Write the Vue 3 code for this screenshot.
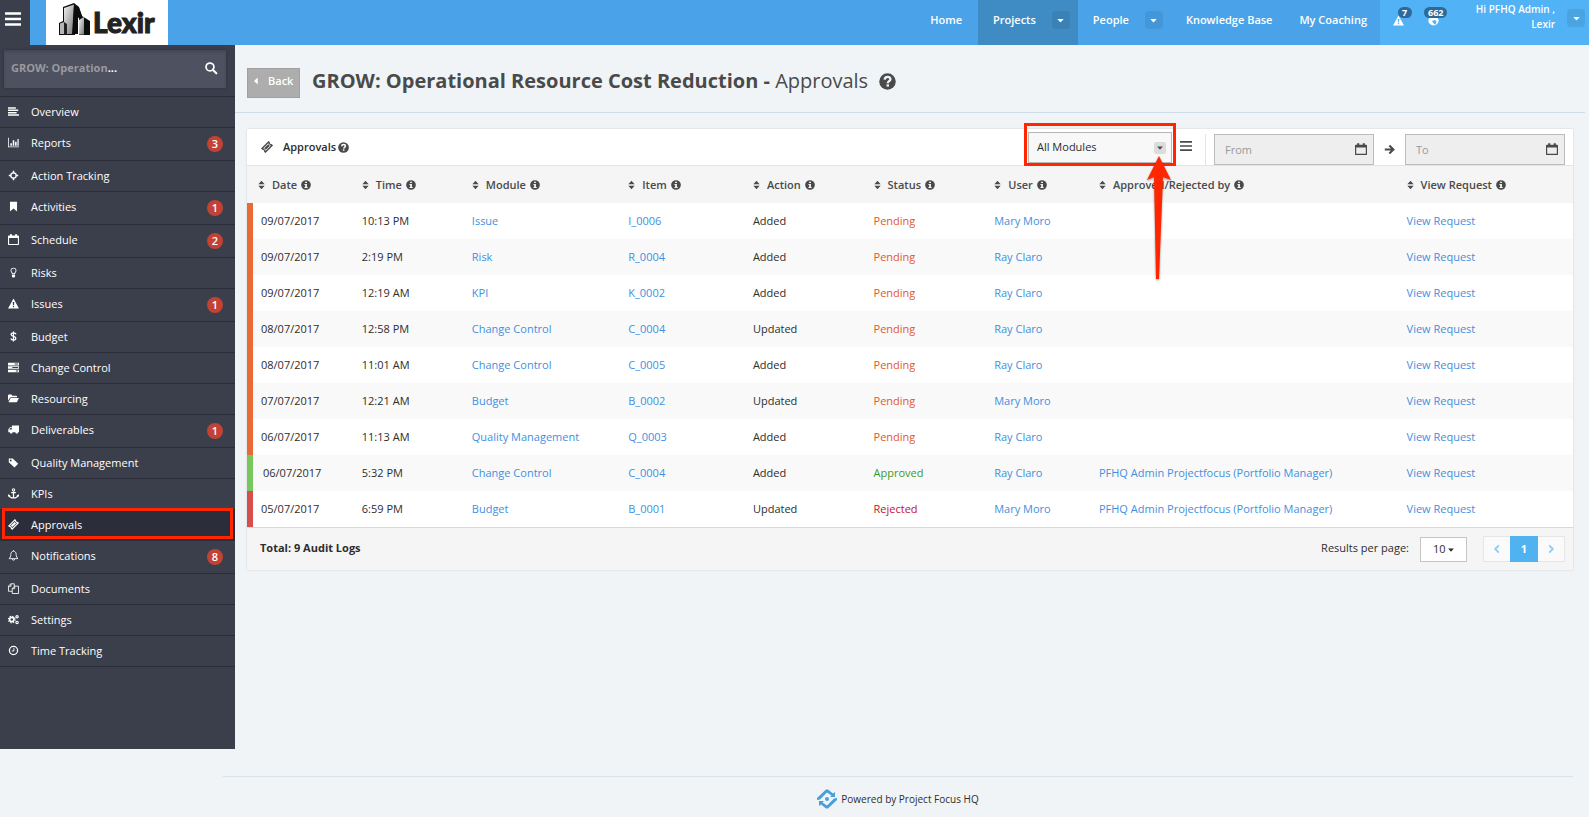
<script setup>
import { ref } from 'vue'

const icons = {
  align: '<path d="M0 1.600h10v1.800H0zM0 4.600h13v1.800H0zM0 7.600h11v1.800H0zM0 10.600h14v1.800H0z"/>',
  chart: '<path d="M0 1h1v11h13v1H0zM3 8h2v3H3zM6 4h2v7H6zM9 6h2v5H9zM12 2.5h1.6V11H12z"/>',
  target: '<path d="M6 1h2v3H6zM6 10h2v3H6zM1 6h3v2H1zM10 6h3v2h-3z"/><path d="M7 2.8a4.2 4.2 0 1 0 0 8.4 4.2 4.2 0 0 0 0-8.4zm0 1.6a2.6 2.6 0 1 1 0 5.2 2.6 2.6 0 0 1 0-5.2z"/>',
  bookmark: '<path d="M2.5 1h9v12.4L7 9.4l-4.500 4z"/>',
  calendar: '<path fill-rule="evenodd" d="M1 2h1.500V.2h2.500V2h4V.2h2.500V2H13q1 0 1 1v10q0 1-1 1H1q-1 0-1-1V3q0-1 1-1zm.4 3.200v7.400h11.200V5.200z"/>',
  bulb: '<path fill-rule="evenodd" d="M7 .8c2.300 0 3.800 1.500 3.800 3.600 0 2-1.600 2.600-1.800 4.600H5C4.800 7 3.200 6.400 3.200 4.400 3.200 2.300 4.700.8 7 .8zm0 1.100c-1.600 0-2.700 1-2.700 2.500C4.300 5.900 5.700 6.600 6 8h2c.3-1.400 1.700-2.100 1.700-3.600C9.700 2.900 8.600 1.900 7 1.900zM5 9.600h4v2.800l-1 1H6l-1-1z"/>',
  warning: '<path fill-rule="evenodd" d="M7 .6 14 13.400H0zM6 5l.3 4h1.400L8 5zm.2 5v1.700h1.600V10z"/>',
  dollar: '<path d="M10.300 4.200C9.800 3 8.700 2.400 7 2.400S4 3.100 4 4.500C4 7.500 10 6 10 9.200c0 1.500-1.200 2.300-3 2.300s-3-.7-3.400-2M7 .5v13" fill="none" stroke="currentColor" stroke-width="1.600"/>',
  tasks: '<path fill-rule="evenodd" d="M0 1h14v3.300H0zM8.500 2v1.300H13V2zM0 5.400h14v3.300H0zM5.500 6.400v1.300H13V6.400zM0 9.800h14v3.300H0zM10 10.800v1.300h3v-1.300z"/>',
  folder: '<path d="M0 10V3.200Q0 2 1.200 2h3Q5 2 5.300 3.400h5q1.200 0 1.200 1.200v.8H4Q3 5.400 2.300 6.400zM4 6.400h10L11.600 11q-.5.900-1.500.9H.6L3 7q.4-.6 1-.6z"/>',
  truck: '<path fill-rule="evenodd" d="M14 2v8.600h-1.200a1.700 1.700 0 0 1-3.400 0H5.800a1.700 1.700 0 0 1-3.400 0H.4V6.600L2.600 4H5V2zM1.500 7H5V5H3z"/>',
  tag: '<path fill-rule="evenodd" d="M1 2h5l7 6.600-4.800 4.800L1 6.800zm2.500 1.300a1.200 1.200 0 1 0 0 2.400 1.200 1.200 0 0 0 0-2.400z"/>',
  anchor: '<circle cx="7" cy="2.400" r="1.500" fill="none" stroke="currentColor" stroke-width="1.300"/><path d="M7 4v8.600M4 5.800h6M1.200 9c.6 2.400 2.800 3.700 5.800 3.700s5.200-1.300 5.800-3.700" fill="none" stroke="currentColor" stroke-width="1.600"/><path d="M0 11V7.800l3.200 1.600zM14 11V7.800l-3.200 1.600z"/>',
  ticket: '<path fill-rule="evenodd" d="M8.800 0 10.400 1.600q-.4 1.100.4 1.700.7.700 1.700.3L14 5.200 5.200 14 3.600 12.400q.4-1-.4-1.700-.7-.7-1.700-.4L0 8.800zM8.400 2.700 2.700 8.400l2.900 2.900 5.700-5.700zM8.400 3.700 10.300 5.600 5.600 10.300 3.700 8.400z"/>',
  bell: '<path d="M7 1.500C4.700 1.700 3.600 3.200 3.600 5.500c0 3-1 4.500-2.400 5.500h11.600c-1.400-1-2.400-2.500-2.400-5.500 0-2.300-1.100-3.800-3.400-4zM7 .3v1.200M5.500 11.500a1.500 1.500 0 0 0 3 0" fill="none" stroke="currentColor" stroke-width="1.100"/>',
  copy: '<path d="M5 10.500H.6V4L3.500 1H8v3M3.700 1v3.200H.6M8.300 4h5.100v9.400H5.400V7zM8.500 4v3.200H5.400" fill="none" stroke="currentColor" stroke-width="1.100"/>',
  cogs: '<circle cx="4.800" cy="7" r="2.700" fill="none" stroke="currentColor" stroke-width="2"/><circle cx="4.800" cy="7" r="4.200" fill="none" stroke="currentColor" stroke-width="1.500" stroke-dasharray="1.650 1.650"/><circle cx="11.500" cy="3.500" r="1.500" fill="none" stroke="currentColor" stroke-width="1.500"/><circle cx="11.500" cy="10.700" r="1.500" fill="none" stroke="currentColor" stroke-width="1.500"/>',
  clock: '<circle cx="7" cy="7" r="5.200" fill="none" stroke="currentColor" stroke-width="1.600"/><path d="M7.500 4v3.600H4.800" fill="none" stroke="currentColor" stroke-width="1.200"/>',
  search: '<circle cx="5.800" cy="5.800" r="4.600" fill="none" stroke="currentColor" stroke-width="2"/><path d="m9 9 4.200 4.200" stroke="currentColor" stroke-width="2.400" stroke-linecap="round"/>',
  info: '<path fill-rule="evenodd" d="M7 .2a6.800 6.800 0 1 0 0 13.600A6.800 6.800 0 0 0 7 .2zM5.700 2.300h2.600v2H5.700zM4.800 5.600h3.500v4.200h1.100v1.500H4.800V9.800h1V7.100h-1z"/>',
  help: '<circle cx="7" cy="7" r="6.800"/><path d="M4.700 5.400C4.800 3.900 5.700 3.200 7 3.200s2.400.8 2.400 2c0 1.500-2.200 1.600-2.200 3.200" fill="none" stroke="var(--mark, #fff)" stroke-width="1.900"/><path d="M6.200 9.300h2v1.900h-2z" fill="var(--mark, #fff)"/>',
  sort: '<path d="M7 1l4.500 4.800h-9zM7 13l4.500-4.800h-9z"/>',
  caret: '<path d="M2 4.500h10L7 10z"/>',
  bars: '<path d="M0 1.200h14v2H0zM0 6h14v2H0zM0 10.800h14v2H0z"/>',
  arrow: '<path d="M1 7h10.500M6.800 1.800 12 7l-5.200 5.200" fill="none" stroke="currentColor" stroke-width="2.600"/>',
  left: '<path d="M9.500 2 4.500 7l5 5" fill="none" stroke="currentColor" stroke-width="2.600"/>',
  right: '<path d="m4.500 2 5 5-5 5" fill="none" stroke="currentColor" stroke-width="2.600"/>',
  back: '<path d="M10 1v12L3.500 7z"/>',
  globe: '<path fill-rule="evenodd" d="M7 .5a6.500 6.500 0 1 0 0 13 6.500 6.500 0 0 0 0-13zM5 7.500l4-1 2 2-2 4-2-2z"/>'
}

const menu = [
  { label: 'Overview', icon: 'align' },
  { label: 'Reports', icon: 'chart', count: 3 },
  { label: 'Action Tracking', icon: 'target' },
  { label: 'Activities', icon: 'bookmark', count: 1 },
  { label: 'Schedule', icon: 'calendar', count: 2 },
  { label: 'Risks', icon: 'bulb' },
  { label: 'Issues', icon: 'warning', count: 1 },
  { label: 'Budget', icon: 'dollar' },
  { label: 'Change Control', icon: 'tasks' },
  { label: 'Resourcing', icon: 'folder' },
  { label: 'Deliverables', icon: 'truck', count: 1 },
  { label: 'Quality Management', icon: 'tag' },
  { label: 'KPIs', icon: 'anchor' },
  { label: 'Approvals', icon: 'ticket', active: true },
  { label: 'Notifications', icon: 'bell', count: 8 },
  { label: 'Documents', icon: 'copy' },
  { label: 'Settings', icon: 'cogs' },
  { label: 'Time Tracking', icon: 'clock' }
]

const columns = ['Date', 'Time', 'Module', 'Item', 'Action', 'Status', 'User', 'Approved/Rejected by', 'View Request']
const approver = 'PFHQ Admin Projectfocus (Portfolio Manager)'
const rows = [
  ['09/07/2017', '10:13 PM', 'Issue', 'I_0006', 'Added', 'Pending', 'Mary Moro', ''],
  ['09/07/2017', '2:19 PM', 'Risk', 'R_0004', 'Added', 'Pending', 'Ray Claro', ''],
  ['09/07/2017', '12:19 AM', 'KPI', 'K_0002', 'Added', 'Pending', 'Ray Claro', ''],
  ['08/07/2017', '12:58 PM', 'Change Control', 'C_0004', 'Updated', 'Pending', 'Ray Claro', ''],
  ['08/07/2017', '11:01 AM', 'Change Control', 'C_0005', 'Added', 'Pending', 'Ray Claro', ''],
  ['07/07/2017', '12:21 AM', 'Budget', 'B_0002', 'Updated', 'Pending', 'Mary Moro', ''],
  ['06/07/2017', '11:13 AM', 'Quality Management', 'Q_0003', 'Added', 'Pending', 'Ray Claro', ''],
  ['06/07/2017', '5:32 PM', 'Change Control', 'C_0004', 'Added', 'Approved', 'Ray Claro', approver],
  ['05/07/2017', '6:59 PM', 'Budget', 'B_0001', 'Updated', 'Rejected', 'Mary Moro', approver]
]

const moduleFilter = ref('All Modules')
const perPage = ref('10')
const from = ref('')
const to = ref('')
</script>

<template>
  <div class="page">
    <header class="topbar">
      <button class="toggle" type="button" aria-label="Toggle menu">
        <svg viewBox="0 0 14 14" v-html="icons.bars" />
      </button>
      <a class="brand" href="#">
        <svg class="towers" viewBox="0 0 32 33">
          <defs>
            <linearGradient id="face" x1="0" y1="0" x2="1" y2="1">
              <stop offset="0" stop-color="#f2f2f2" /><stop offset="1" stop-color="#777" />
            </linearGradient>
          </defs>
          <path d="M4 4 15 0l5 4 3 9 8 5v14H20V13l-4-11v30H0V20l4-2z" fill="#0c0c0c" />
          <path d="M5 5 15 1.500 13 31H5z" fill="url(#face)" />
          <path d="M15 1.500 20 5l3 8-4 2v16h-5z" fill="#0c0c0c" />
          <path d="M1 20.500l4-1.500V31H1z" fill="#b5b5b5" />
          <path d="M5 19l3 2v10.500H5z" fill="#222" />
          <path d="M20 17l5-3v17.500h-5z" fill="url(#face)" />
        </svg>
        <span>Lexir</span>
      </a>
      <nav class="nav">
        <a class="home" href="#">Home</a>
        <div class="group current">
          <a href="#">Projects</a>
          <button type="button" aria-label="Projects menu"><svg viewBox="0 0 14 14" v-html="icons.caret" /></button>
        </div>
        <div class="group">
          <a href="#">People</a>
          <button type="button" aria-label="People menu"><svg viewBox="0 0 14 14" v-html="icons.caret" /></button>
        </div>
        <a class="knowledge" href="#">Knowledge Base</a>
        <a class="coaching" href="#">My Coaching</a>
      </nav>
      <div class="account">
        <a class="alert" href="#" aria-label="Alerts">
          <svg viewBox="0 0 14 14" v-html="icons.warning" /><span>7</span>
        </a>
        <a class="alert wide" href="#" aria-label="Activity">
          <svg viewBox="0 0 14 14" v-html="icons.globe" /><span>662</span>
        </a>
        <div class="who">Hi PFHQ Admin ,<br>Lexir</div>
        <button type="button" aria-label="Account menu"><svg viewBox="0 0 14 14" v-html="icons.caret" /></button>
      </div>
    </header>

    <div class="shell">
      <aside class="sidebar">
        <button class="picker" type="button">
          <span><span class="muted">GROW: Operation</span>...</span>
          <svg viewBox="0 0 14 14" v-html="icons.search" />
        </button>
        <ul>
          <li v-for="m in menu" :key="m.label" :class="{ active: m.active }">
            <a href="#">
              <svg viewBox="0 0 14 14" v-html="icons[m.icon]" />
              <span class="label">{{ m.label }}</span>
              <span v-if="m.count" class="count">{{ m.count }}</span>
            </a>
          </li>
        </ul>
      </aside>

      <main>
        <div class="heading">
          <button class="back" type="button"><svg viewBox="0 0 14 14" v-html="icons.back" />Back</button>
          <h1>GROW: Operational Resource Cost Reduction - <span>Approvals</span></h1>
          <svg class="help" viewBox="0 0 14 14" v-html="icons.help" />
        </div>

        <section class="panel">
          <div class="tools">
            <svg class="ticket" viewBox="0 0 14 14" v-html="icons.ticket" />
            <h2>Approvals</h2>
            <svg class="help" viewBox="0 0 14 14" v-html="icons.help" />
            <div class="module">
              <select v-model="moduleFilter" aria-label="Module"><option>All Modules</option></select>
              <span class="drop"><svg viewBox="0 0 14 14" v-html="icons.caret" /></span>
              <span class="frame" />
              <svg class="pointer" viewBox="0 0 24 124"><path d="M12 0 24 24 16 21 12 123H9L7 21 0 24z" /></svg>
            </div>
            <button class="list" type="button" aria-label="List options"><svg viewBox="0 0 14 14" v-html="icons.bars" /></button>
            <div class="dates">
              <div class="date">
                <input v-model="from" placeholder="From" aria-label="From">
                <svg viewBox="0 0 14 14" v-html="icons.calendar" />
              </div>
              <svg class="to" viewBox="0 0 14 14" v-html="icons.arrow" />
              <div class="date">
                <input v-model="to" placeholder="To" aria-label="To">
                <svg viewBox="0 0 14 14" v-html="icons.calendar" />
              </div>
            </div>
          </div>

          <table>
            <colgroup><col v-for="(c, i) in columns" :key="c" :class="'c' + i"></colgroup>
            <thead>
              <tr>
                <th v-for="c in columns" :key="c" scope="col">
                  <div>
                    <svg class="sort" viewBox="2 0 10 14" v-html="icons.sort" />
                    <span>{{ c }}</span>
                    <svg class="info" viewBox="0 0 14 14" v-html="icons.info" />
                  </div>
                </th>
              </tr>
            </thead>
            <tbody>
              <tr v-for="(r, i) in rows" :key="i" :class="r[5].toLowerCase()">
                <td>{{ r[0] }}</td>
                <td>{{ r[1] }}</td>
                <td><a href="#">{{ r[2] }}</a></td>
                <td><a href="#">{{ r[3] }}</a></td>
                <td>{{ r[4] }}</td>
                <td class="status">{{ r[5] }}</td>
                <td><a href="#">{{ r[6] }}</a></td>
                <td><a v-if="r[7]" href="#">{{ r[7] }}</a></td>
                <td><a href="#">View Request</a></td>
              </tr>
            </tbody>
          </table>

          <div class="summary">
            <strong>Total: 9 Audit Logs</strong>
            <label for="per-page">Results per page:</label>
            <div class="size">
              <select id="per-page" v-model="perPage"><option>10</option></select>
              <svg viewBox="0 0 14 14" v-html="icons.caret" />
            </div>
            <nav class="pages" aria-label="Pages">
              <button type="button" aria-label="Previous"><svg viewBox="0 0 14 14" v-html="icons.left" /></button>
              <button type="button" class="on">1</button>
              <button type="button" aria-label="Next"><svg viewBox="0 0 14 14" v-html="icons.right" /></button>
            </nav>
          </div>
        </section>
      </main>
    </div>

    <footer>
      <svg viewBox="0 0 20 20">
        <path d="M0 11V9L9 .5h2l5 4 2-1.500v5h-5l1.500-1.500L10 3.500 3 10.500zM20 9v2l-9 8.500H9l-5-4L2 17v-5h5l-1.500 1.500L10 16.500l7-7z" fill="#4a9fd8" />
        <circle cx="10" cy="10" r="2" fill="#4a9fd8" />
      </svg>
      <span>Powered by Project Focus HQ</span>
    </footer>
  </div>
</template>

<style>
body { margin: 0; background: #f0f4f7; }
</style>

<style scoped>
* { box-sizing: border-box; }
.page {
  min-height: 100vh;
  font: 11px/16px "Open Sans", "Noto Sans", sans-serif;
  color: #2d2d2d;
}
svg { display: block; flex: none; fill: currentColor; overflow: visible; }
a { color: #3f90e0; text-decoration: none; }
button, select, input { font: inherit; color: inherit; margin: 0; padding: 0; border: 0; border-radius: 0; background: none; }
button { cursor: pointer; }

.topbar { display: flex; height: 45px; background: #4aa3e9; color: #fff; }
.topbar a { color: #fff; }
.toggle { width: 30px; background: #3b3e4b; }
.toggle svg { width: 16px; height: 16px; margin: -7px 0 0 5px; }
.brand { display: flex; width: 122px; margin-left: 16px; padding: 3px 0 0 13px; background: #fff; }
.towers { width: 32px; height: 33px; }
.topbar .brand span { color: #222; font: 900 28px/38px Lato, sans-serif; margin-left: 2px; -webkit-text-stroke: 1px #222; }
.nav { display: flex; margin-left: auto; align-items: stretch; line-height: 40px; font-weight: 600; }
.home { padding-right: 16px; }
.group { display: flex; padding: 0 8px 0 15px; }
.group.current { background: #3f8cc5; }
.group button, .account button { display: grid; place-items: center; width: 18px; height: 18px; border-radius: 4px; background: #00000014; }
.group button { margin: 11px 0 0 16px; }
.group svg, .account button svg { width: 9px; height: 9px; }
.knowledge { padding: 0 14px 0 15px; }
.coaching { padding: 0 13px; }
.account { display: flex; width: 209px; padding: 0 4px 0 13px; background: #51b2f6; }
.alert { position: relative; width: 35px; padding-top: 15px; }
.alert svg { width: 11px; height: 11px; }
.alert span { position: absolute; left: 5px; top: 7px; min-width: 14px; padding: 0 4px; border-radius: 6px; background: #2d6a99; font: 700 9px/11px "Open Sans", sans-serif; }
.alert.wide span { left: -4px; }
.who { flex: 1; margin-right: 12px; padding-top: 2px; text-align: right; line-height: 15px; font-weight: 600; font-size: 10px; }
.account button { margin-top: 9px; }

.shell { display: flex; min-height: calc(100vh - 113px); }
.sidebar { flex: none; width: 235px; background: #3b3e4b; color: #fff; }
.picker { display: flex; align-items: center; justify-content: space-between; width: 222px; height: 38px; margin: 5px 0 8px 4px; padding: 0 9px 2px 7px; background: #4e5160; box-shadow: 0 0 2px #2d303c, inset 0 2px 2px #444754; font-weight: 700; }
.picker svg { width: 12px; height: 12px; }
.muted { color: #999a9f; }
ul { list-style: none; margin: 0; padding: 0; border-bottom: 1px solid #2b2e3a; }
li { position: relative; border-top: 1px solid #2b2e3a; }
li a { display: flex; align-items: flex-start; gap: 12px; padding: 7px 12px 7px 8px; color: #fff; }
li svg { width: 11px; height: 11px; margin-top: 2px; }
.label { flex: 1; }
.count { width: 16px; height: 16px; margin: 1px 0; border-radius: 50%; background: #c24335; text-align: center; font-weight: 600; }
li.active { background: #2b2e3a; }
li.active::after { content: ""; position: absolute; inset: -2px 2px 1px; border: 3px solid #ff2600; }

main { flex: 1; min-width: 0; }
.heading { display: flex; height: 68px; margin-right: 4px; padding: 23px 0 0 12px; border-bottom: 1px solid #cfdbe6; color: #4a4a4a; }
.back { display: flex; align-items: center; gap: 8px; width: 53px; height: 30px; padding: 0 0 4px 4px; background: #adadad; border: 1px solid #a0a0a0; color: #fff; font-weight: 600; }
.back svg { width: 8px; height: 8px; }
h1 { margin: 0 0 0 12px; font-size: 20px; line-height: 26px; font-weight: 700; }
h1 span { font-weight: 400; }
.heading .help { width: 17px; height: 17px; margin: 5px 0 0 11px; --mark: #f0f4f7; }

.panel { margin: 16px 16px 0 12px; background: #fff; box-shadow: 0 0 2px #00000026; }
.tools { display: flex; align-items: center; height: 37px; padding: 0 8px 0 14px; border-bottom: 1px solid #e4e4e4; color: #4a4a4a; }
.ticket { width: 12px; height: 12px; }
h2 { margin: 0 2px 0 10px; font-size: 11px; line-height: 16px; font-weight: 600; color: #2d2d2d; }
.tools .help { width: 11px; height: 11px; }
.module { position: relative; width: 144px; height: 31px; margin: 0 8px 0 auto; }
.module select { appearance: none; width: 100%; height: 100%; padding: 0 8px; border: 1px solid #b7b7b7; background: #f8f8f8; color: #2d2d2d; }
.drop { position: absolute; right: 6px; top: 10px; display: grid; place-items: center; width: 12px; height: 12px; border-radius: 2px; background: #dcdcdc; pointer-events: none; }
.drop svg { width: 8px; height: 8px; }
.frame { position: absolute; inset: -9px -4px -3px; border: 3px solid #ff2600; pointer-events: none; }
.pointer { position: absolute; z-index: 2; left: 119px; top: 24px; width: 24px; height: 124px; fill: #ff2600; filter: drop-shadow(0 1px 1px #0006); pointer-events: none; }
.list svg { width: 12px; height: 12px; margin-bottom: 2px; }
.dates { display: flex; align-items: center; margin: 5px 0 0 13px; padding-left: 8px; border-left: 1px solid #e4e4e4; }
.date { position: relative; width: 160px; }
.date input { display: block; width: 100%; height: 31px; padding: 0 30px 0 10px; border: 1px solid #bcbcbc; background: #eee; }
.date input::placeholder { color: #999; opacity: 1; }
.date svg { position: absolute; right: 7px; top: 9px; width: 12px; height: 12px; }
.to { width: 11px; height: 11px; margin: 0 10px; }

table { width: 100%; table-layout: fixed; border-collapse: separate; border-spacing: 0; }
.c0 { width: 7.6%; } .c1 { width: 8.3%; } .c2 { width: 11.8%; } .c3 { width: 9.4%; } .c4 { width: 9.1%; }
.c5 { width: 9.1%; } .c6 { width: 7.9%; } .c7 { width: 23.2%; }
th { height: 37px; padding: 0 0 0 14px; background: #f5f5f5; text-align: left; font-weight: 600; color: #4a4a4a; white-space: nowrap; }
th:first-child { padding-left: 11px; }
th div { display: flex; align-items: center; }
.sort { width: 7px; height: 10px; margin-right: 7px; }
.info { width: 10px; height: 10px; margin-left: 4px; }
td { height: 36px; padding: 0 0 0 14px; white-space: nowrap; }
td:first-child { padding-left: 8px; border-left: 6px solid #e96a36; }
tbody tr:nth-child(even) { background: #f9f9f9; }
.pending .status { color: #e4572e; }
.approved .status { color: #3f9a1e; }
.approved td:first-child { padding-left: 10px; border-left-color: #78c75c; }
.rejected .status { color: #c8102e; }
.rejected td:first-child { border-left-color: #d64e4e; }

.summary { display: flex; align-items: center; height: 43px; padding: 0 8px 0 13px; background: #f5f5f5; border-top: 1px solid #d9d9d9; }
.summary strong, .summary label { padding-bottom: 2px; }
.summary label { margin: 0 11px 0 auto; }
.size { position: relative; width: 47px; }
.size select { appearance: none; display: block; width: 100%; height: 25px; padding-left: 12px; border: 1px solid #c5c5c5; background: #fff; }
.size svg { position: absolute; right: 12px; top: 9px; width: 8px; height: 8px; pointer-events: none; }
.pages { display: flex; margin-left: 16px; border: 1px solid #e6e6e6; background: #fafafa; }
.pages button { display: grid; place-items: center; width: 26px; height: 24px; color: #8fcdf3; }
.pages svg { width: 10px; height: 10px; }
.pages .on { width: 28px; height: 26px; margin: -1px 0; background: #51b2f0; color: #fff; font-weight: 700; }

footer { display: flex; align-items: center; justify-content: center; gap: 4px; height: 41px; margin: 27px 16px 0 223px; padding-top: 3px; border-top: 1px solid #d8e2ea; font-size: 10px; }
footer svg { width: 20px; height: 20px; }
</style>
